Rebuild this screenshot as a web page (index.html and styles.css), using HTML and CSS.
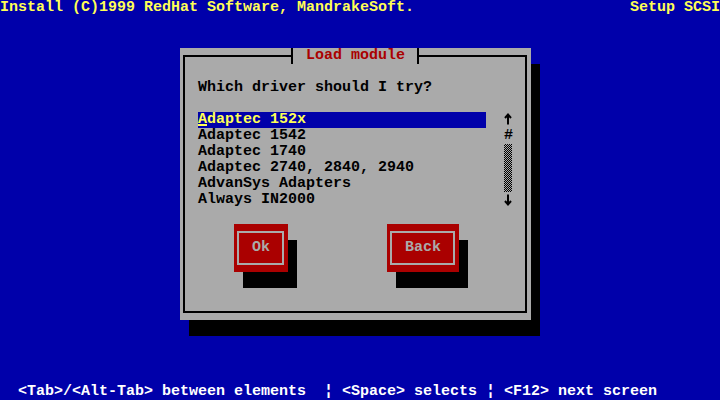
FILE: index.html
```html
<!DOCTYPE html>
<html lang="en">
<head>
  <meta charset="UTF-8">
  <title>Setup SCSI</title>
  <link rel="stylesheet" href="styles.css">
</head>
<body>

  <div class="screen">
    <div class="top-left">Install (C)1999 RedHat Software, MandrakeSoft.</div>
    <div class="top-right">Setup SCSI</div>

    <div class="dialog">
      <div class="title"><span class="tee-left"></span><span class="title-text"> Load module </span><span class="tee-right"></span></div>

      <div class="prompt">Which driver should I try?</div>

      <ul class="list">
        <li class="selected"><span class="cursor">A</span>daptec 152x</li>
        <li>Adaptec 1542</li>
        <li>Adaptec 1740</li>
        <li>Adaptec 2740, 2840, 2940</li>
        <li>AdvanSys Adapters</li>
        <li>Always IN2000</li>
      </ul>

      <div class="scrollbar">
        <svg class="arrow" width="9" height="16" viewBox="0 0 9 16">
          <path d="M4 2.5V12.5M1 6L4 2.5L7 6" />
        </svg>
        <span>#</span>
        <span class="track"></span>
        <span class="track"></span>
        <span class="track"></span>
        <svg class="arrow" width="9" height="16" viewBox="0 0 9 16">
          <path d="M4 2.5V12.5M1 9L4 12.5L7 9" />
        </svg>
      </div>

      <div class="btn btn-ok">Ok</div>
      <div class="btn btn-back">Back</div>
    </div>

    <div class="help">&lt;Tab&gt;/&lt;Alt-Tab&gt; between elements  ¦ &lt;Space&gt; selects ¦ &lt;F12&gt; next screen</div>
  </div>

</body>
</html>
```

FILE: styles.css
```css
body {
  margin: 0;
  background-color: #0000aa;
  font: bold 15px/16px "Liberation Mono", "DejaVu Sans Mono", monospace;
}
.screen {
  display: grid;
  grid-template-columns: repeat(80, 9px);
  grid-template-rows: repeat(25, 16px);
  width: 720px;
  height: 400px;
  overflow: hidden;
}
.top-left,
.top-right,
.help,
.title-text,
.list li {
  white-space: pre;
}
.top-left {
  grid-column: 1 / 71;
  grid-row: 1;
  color: #ffff55;
}
.top-right {
  grid-column: 71 / 81;
  grid-row: 1;
  color: #ffff55;
}
.help {
  grid-column: 3 / 81;
  grid-row: 25;
  color: #ffffff;
}

/* window */
.dialog {
  grid-column: 21 / 60;
  grid-row: 4 / 21;
  position: relative;
  display: grid;
  grid-template-columns: repeat(39, 9px);
  grid-template-rows: repeat(17, 16px);
  background-color: #aaaaaa;
  color: #000;
  box-shadow: 9px 16px 0 #000;
}
.dialog::before {
  content: "";
  position: absolute;
  inset: 7px 4px 7px 3px;
  border: 2px solid #000;
}
.title {
  grid-column: 13 / 28;
  grid-row: 1;
  display: flex;
  position: relative;
  z-index: 1;
}
.title-text {
  background-color: #aaaaaa;
  color: #aa0000;
}
.tee-left,
.tee-right {
  width: 9px;
  height: 16px;
}
.tee-left {
  background:
    linear-gradient(#000, #000) 3px 0 / 2px 16px no-repeat,
    linear-gradient(#000, #000) 0 7px / 5px 2px no-repeat,
    #aaaaaa;
}
.tee-right {
  background:
    linear-gradient(#000, #000) 3px 0 / 2px 16px no-repeat,
    linear-gradient(#000, #000) 3px 7px / 6px 2px no-repeat,
    #aaaaaa;
}
.prompt {
  grid-column: 3 / 38;
  grid-row: 3;
  white-space: nowrap;
}

/* listbox */
.list {
  grid-column: 3 / 35;
  grid-row: 5 / 11;
  display: grid;
  grid-template-rows: repeat(6, 16px);
  margin: 0;
  padding: 0;
  list-style: none;
}
.selected {
  background-color: #0000aa;
  color: #ffff55;
}
.cursor {
  position: relative;
}
.cursor::after {
  content: "";
  position: absolute;
  left: 0;
  right: 0;
  top: 13px;
  height: 2px;
  background-color: #ffff55;
}
.scrollbar {
  grid-column: 37;
  grid-row: 5 / 11;
  display: grid;
  grid-template-rows: repeat(6, 16px);
  text-align: center;
}
.arrow {
  display: block;
  fill: none;
  stroke: #000;
  stroke-width: 2;
}
.track {
  width: 8px;
  background: repeating-conic-gradient(#000 0 25%, #aaaaaa 0 50%) 0 0 / 2px 2px;
}

/* buttons */
.btn {
  position: relative;
  display: flex;
  align-items: center;
  justify-content: center;
  background-color: #aa0000;
  color: #aaaaaa;
  box-shadow: 9px 16px 0 #000;
}
.btn::before {
  content: "";
  position: absolute;
  inset: 7px 4px 7px 3px;
  border: 2px solid #aaaaaa;
}
.btn-ok {
  grid-column: 7 / 13;
  grid-row: 12 / 15;
}
.btn-back {
  grid-column: 24 / 32;
  grid-row: 12 / 15;
}
```
